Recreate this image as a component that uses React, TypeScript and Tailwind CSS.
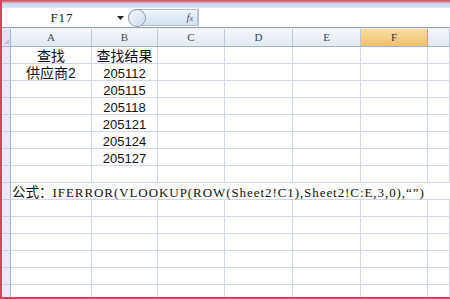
import React from 'react';

const cols = [
  { key: 'A', w: 'w-[81px]', label: 'A' },
  { key: 'B', w: 'w-[66px]', label: 'B' },
  { key: 'C', w: 'w-[67px]', label: 'C' },
  { key: 'D', w: 'w-[68px]', label: 'D' },
  { key: 'E', w: 'w-[68px]', label: 'E' },
  { key: 'F', w: 'w-[67px]', label: 'F' },
  { key: 'G', w: 'flex-1', label: '' },
];

const rows: { a?: string; b?: string; formula?: boolean }[] = [
  { a: '查找', b: '查找结果' },
  { a: '供应商2', b: '205112' },
  { b: '205115' },
  { b: '205118' },
  { b: '205121' },
  { b: '205124' },
  { b: '205127' },
  {},
  { formula: true },
  {}, {}, {}, {}, {}, {}, {},
];

const cjk = { fontFamily: '"Liberation Sans", "Noto Sans CJK SC", sans-serif' };
const serif = { fontFamily: '"Liberation Serif", "Noto Sans CJK SC", serif' };

const Cell: React.FC<{ w: string; text?: string }> = ({ w, text }) => {
  const isNum = text && /^\d+$/.test(text);
  return (
    <div
      className={`${w} h-full shrink-0 border-r border-b border-[#d0d7e5] flex items-end justify-center text-[#111] ${isNum ? 'text-[13px]' : 'text-[14px]'} leading-none`}
      style={cjk}
    >
      {text}
    </div>
  );
};

export default function App() {
  return (
    <div className="w-[450px] h-[299px] overflow-hidden bg-white flex flex-col border-l-2 border-b-2 border-[#d6455c]">
      {/* title strip */}
      <div className="h-[3px] shrink-0 bg-gradient-to-b from-[#d0465b] to-[#e8a9b6]" />
      <div className="h-[5px] shrink-0 bg-gradient-to-b from-[#c3d7ee] to-[#dbe7f4]" />

      {/* formula bar */}
      <div className="h-[20px] shrink-0 flex items-stretch bg-white border-b border-[#8fa3ba]">
        <div className="w-[110px] flex items-center justify-center text-[13px] tracking-[1px] text-[#222] pl-[10px]" style={serif}>
          F17
        </div>
        <div className="w-[16px] flex items-center justify-center">
          <svg width="7" height="4" viewBox="0 0 7 4"><path d="M0 0h7L3.5 4z" fill="#222" /></svg>
        </div>
        <div className="w-[70px] my-[1px] relative rounded-l-full bg-gradient-to-b from-[#eef4fb] to-[#d3e1f1] border border-[#a9bdd6] flex items-center justify-end pr-[4px]">
          <div className="absolute left-[-1px] top-[-1px] w-[18px] h-[18px] rounded-full border border-[#8c9db3] bg-gradient-to-br from-[#f7fafd] to-[#cfdcec]" />
          <span className="text-[11px] italic text-[#555]" style={{ fontFamily: '"Liberation Serif", serif' }}>
            f<span className="text-[8px]">x</span>
          </span>
        </div>
        <div className="flex-1 border-l border-[#b7c6d8]" />
      </div>
      <div className="h-px shrink-0 bg-[#e9eef5]" />

      {/* column headers */}
      <div className="h-[18px] shrink-0 flex border-b border-[#9eb6ce]">
        <div className="w-[9px] shrink-0 bg-[#dde7f3] border-r border-[#9eb6ce] relative">
          <svg className="absolute right-[1px] bottom-[2px]" width="5" height="5" viewBox="0 0 5 5"><path d="M5 0v5H0z" fill="#b3c4d8" /></svg>
        </div>
        {cols.map((c) => (
          <div
            key={c.key}
            className={`${c.w} shrink-0 flex items-center justify-center text-[11px] border-r ${
              c.key === 'F'
                ? 'bg-gradient-to-b from-[#f9dca6] to-[#f1c06a] border-[#d9a54c] text-[#333]'
                : 'bg-gradient-to-b from-[#f4f7fb] to-[#e2e9f2] border-[#b9c9da] text-[#3a4a5c]'
            }`}
            style={{ fontFamily: '"Liberation Serif", serif' }}
          >
            {c.label}
          </div>
        ))}
      </div>

      {/* rows */}
      {rows.map((r, i) => (
        <div key={i} className="h-[17px] shrink-0 flex">
          <div className="w-[9px] h-full shrink-0 bg-[#e4ecf7] border-r border-[#9eb6ce] border-b border-b-[#c5d3e3]" />
          {r.formula ? (
            <div className="flex-1 h-full border-b border-[#d0d7e5] flex items-end pl-[1px] text-[#111] leading-none whitespace-nowrap">
              <span className="text-[13.5px]" style={cjk}>公式：</span>
              <span className="text-[13px] tracking-[0.93px]" style={serif}>IFERROR(VLOOKUP(ROW(Sheet2!C1),Sheet2!C:E,3,0),“”)</span>
            </div>
          ) : (
            cols.map((c) => (
              <Cell key={c.key} w={c.w} text={c.key === 'A' ? r.a : c.key === 'B' ? r.b : undefined} />
            ))
          )}
        </div>
      ))}
    </div>
  );
}
